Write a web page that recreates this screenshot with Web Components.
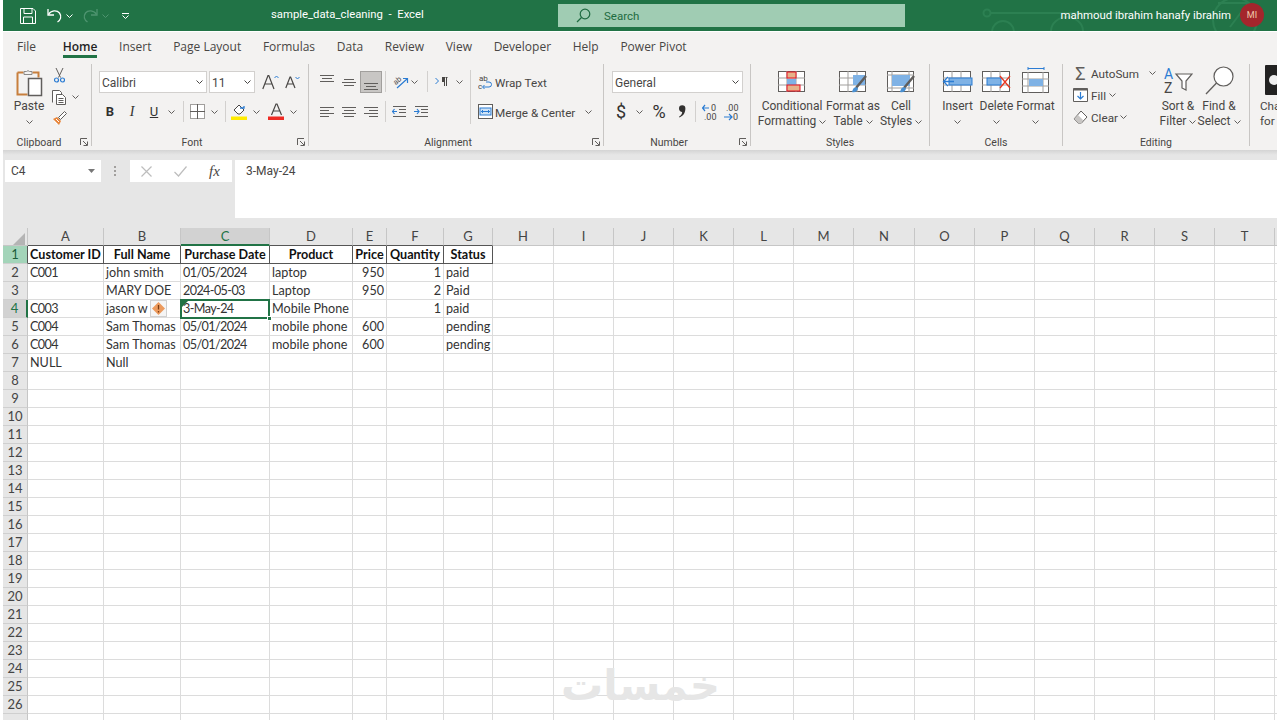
<!DOCTYPE html>
<html lang="en">
<head>
<meta charset="utf-8">
<title>sample_data_cleaning - Excel</title>
<style>
html, body { margin: 0; height: 720px; overflow: hidden; background: #fff; }
body { font-family: Roboto, "Noto Sans", sans-serif; font-size: 12px; color: #444; padding: 0 3px; box-sizing: border-box; }
svg { display: block; }
.row { display: flex; align-items: center; }
.col { display: flex; flex-direction: column; }
.r1 { height: 23px; }
.r2 { height: 23px; margin-top: 7px; }
.vsep { width: 1px; height: 21px; background: #d2d0ce; flex: none; }
.txt { white-space: nowrap; font-size: 11.700px; color: #484644; position: relative; top: 1px; }
.gap { flex: none; }
</style>
</head>
<body>
<x-titlebar title-text="sample_data_cleaning  -  Excel" user="mahmoud ibrahim hanafy ibrahim" initials="MI"></x-titlebar>
<x-tabs active="Home" items="File,Home,Insert,Page Layout,Formulas,Data,Review,View,Developer,Help,Power Pivot"></x-tabs>
<x-ribbon>
  <x-group w="89" label="Clipboard" launcher>
    <div class="row" style="align-items:flex-start;padding-left:4px">
      <x-big w="44" lines="Paste" drop>
        <svg width="28" height="30" viewBox="0 0 28 30"><path d="M2.500 5.500h6M17.500 5.500h6v5M2.500 5.500v22h10" fill="none" stroke="#c87f3d" stroke-width="2"/><path d="M9 4.500h2.500a2 2 0 0 1 3 0H17v3H9z" fill="#f3f2f1" stroke="#8a8886"/><rect x="13.500" y="11.500" width="13" height="17" fill="#fff" stroke="#605e5c" stroke-width="1.500"/></svg>
      </x-big>
      <div class="col" style="margin-top:-6px">
        <x-tool w="16" h="22"><svg width="11" height="15" viewBox="0 0 11 15"><path d="M2 0l4.500 9.500M9 0L4.500 9.500" fill="none" stroke="#605e5c"/><circle cx="2.500" cy="12" r="2" fill="none" stroke="#2b7cd3" stroke-width="1.200"/><circle cx="8.500" cy="12" r="2" fill="none" stroke="#2b7cd3" stroke-width="1.200"/></svg></x-tool>
        <div class="row"><x-tool w="16" h="22"><svg width="15" height="15" viewBox="0 0 15 15"><path d="M.5 12.500V.5h7l2 2v2" fill="#fff" stroke="#605e5c"/><path d="M4.500 4.500h6l3 3v7h-9z" fill="#fff" stroke="#605e5c"/><path d="M6.500 8.500h5M6.500 10.500h5M6.500 12.500h5" stroke="#605e5c" fill="none"/></svg></x-tool><x-tool w="17" h="22"><x-chev></x-chev></x-tool></div>
        <x-tool w="16" h="21"><svg width="15" height="15" viewBox="0 0 15 15"><path d="M1 8l6 6 2-4-4-4z" fill="#e8853a"/><path d="M2 10l3 3M4 8l3 3" stroke="#fff"/><path d="M6.500 6.500l6-6 2 2-6 6z" fill="#fff" stroke="#605e5c"/></svg></x-tool>
      </div>
    </div>
  </x-group>

  <x-group w="217" label="Font" launcher>
    <div class="col" style="padding-left:7px">
      <div class="row r1" style="height:23px">
        <x-combo w="108" text="Calibri"></x-combo><span class="gap" style="width:2px"></span><x-combo w="46" text="11"></x-combo>
        <span class="gap" style="width:6px"></span>
        <x-tool w="18" h="22"><svg width="17" height="16" viewBox="0 0 17 16"><path d="M.8 15L6 1.500h.8L12 15M3 10h7" fill="none" stroke="#484644" stroke-width="1.200"/><path d="M12.500 4l2-2 2 2" fill="none" stroke="#2b7cd3"/></svg></x-tool>
        <span class="gap" style="width:6px"></span>
        <x-tool w="15" h="22"><svg width="15" height="14" viewBox="0 0 15 14"><path d="M.8 13L5 2h.6L10 13M2.500 9h6" fill="none" stroke="#484644" stroke-width="1.200"/><path d="M10.500 2l2 2 2-2" fill="none" stroke="#2b7cd3"/></svg></x-tool>
      </div>
      <div class="row r2">
        <x-tool w="22" h="22"><b style="font:700 13px Roboto;color:#323130">B</b></x-tool>
        <x-tool w="22" h="22"><i style="font:italic 14px 'Liberation Serif';color:#323130">I</i></x-tool>
        <x-tool w="22" h="22"><u style="font:13px Roboto;color:#323130">U</u></x-tool>
        <x-tool w="12" h="22"><x-chev></x-chev></x-tool>
        <span class="gap" style="width:6px"></span><span class="vsep"></span><span class="gap" style="width:2px"></span>
        <x-tool w="22" h="22"><svg width="15" height="15" viewBox="0 0 15 15"><rect x=".5" y=".5" width="14" height="14" fill="#fff" stroke="#a19f9d"/><path d="M7.500 0v15M0 7.500h15" stroke="#605e5c"/></svg></x-tool>
        <x-tool w="12" h="22"><x-chev></x-chev></x-tool>
        <span class="gap" style="width:5px"></span><span class="vsep"></span><span class="gap" style="width:2px"></span>
        <x-tool w="22" h="22"><svg width="17" height="17" viewBox="0 0 17 17"><path d="M3 7l5-5 5 5-4 4H7z" fill="#fff" stroke="#484644"/><path d="M9 5l4 0v-2" fill="none" stroke="#2b7cd3" stroke-width="1.300"/><rect x="0" y="13.500" width="16" height="3.500" fill="#ffeb00"/></svg></x-tool>
        <x-tool w="12" h="22"><x-chev></x-chev></x-tool>
        <span class="gap" style="width:3px"></span>
        <x-tool w="22" h="22"><svg width="17" height="17" viewBox="0 0 17 17"><path d="M3.500 12L8 1h1l4.500 11M5.300 8h6.400" fill="none" stroke="#484644" stroke-width="1.200"/><rect x="0" y="13.500" width="16" height="3.500" fill="#ee2b24"/></svg></x-tool>
        <x-tool w="12" h="22"><x-chev></x-chev></x-tool>
      </div>
    </div>
  </x-group>

  <x-group w="295" label="Alignment" launcher>
    <div class="row" style="align-items:flex-start;padding-left:7px">
      <div class="col">
        <div class="row r1">
          <x-tool w="22" h="22"><x-lines v="0,14 2,10 0,14" top="1"></x-lines></x-tool>
          <x-tool w="22" h="22"><x-lines v="2,10 0,14 2,10" top="5"></x-lines></x-tool>
          <x-tool w="22" h="22" active><x-lines v="0,14 2,10 0,14" top="9"></x-lines></x-tool>
          <span class="gap" style="width:3px"></span><span class="vsep"></span><span class="gap" style="width:6px"></span>
          <x-tool w="16" h="22"><svg width="16" height="16" viewBox="0 0 16 16" style="overflow:visible"><text x="1" y="10" font-size="7.500" font-family="Roboto" fill="#484644" transform="rotate(-40 4 7)">ab</text><path d="M5 14l10-9M11 4.500h4.500V9" fill="none" stroke="#2b7cd3" stroke-width="1.200"/></svg></x-tool>
          <x-tool w="12" h="22"><x-chev></x-chev></x-tool>
          <span class="gap" style="width:7px"></span><span class="vsep"></span><span class="gap" style="width:7px"></span>
          <x-tool w="13" h="22"><svg width="13" height="9" viewBox="0 0 13 9"><path d="M.5 1l3 3-3 3" fill="none" stroke="#2b7cd3"/><path d="M8 0h5M9.500 0v9M11.500 0v9" fill="none" stroke="#484644"/><path d="M7 0h3v5H7z" fill="#484644"/></svg></x-tool>
          <span class="gap" style="width:5px"></span>
          <x-tool w="12" h="22"><x-chev></x-chev></x-tool>
        </div>
        <div class="row r2">
          <x-tool w="22" h="22"><x-lines v="0,14 0,9 0,14 0,9" top="3"></x-lines></x-tool>
          <x-tool w="22" h="22"><x-lines v="0,14 2,10 0,14 2,10" top="3"></x-lines></x-tool>
          <x-tool w="22" h="22"><x-lines v="0,14 5,9 0,14 5,9" top="3"></x-lines></x-tool>
          <span class="gap" style="width:3px"></span><span class="vsep"></span><span class="gap" style="width:6px"></span>
          <x-tool w="14" h="22"><svg width="14" height="11" viewBox="0 0 14 11"><path d="M0 5.500h5M2.500 3L.5 5.500 2.500 8" fill="none" stroke="#2b7cd3" stroke-width="1.200"/><path d="M1 .5h13M7 3.500h7M7 6.500h7M1 10.500h13" stroke="#605e5c"/></svg></x-tool>
          <span class="gap" style="width:8px"></span>
          <x-tool w="14" h="22"><svg width="14" height="11" viewBox="0 0 14 11"><path d="M0 5.500h5M3 3l2 2.500L3 8" fill="none" stroke="#2b7cd3" stroke-width="1.200"/><path d="M1 .5h13M7 3.500h7M7 6.500h7M1 10.500h13" stroke="#605e5c"/></svg></x-tool>
        </div>
      </div>
      <span class="gap" style="width:5px"></span>
      <span class="vsep" style="height:54px"></span>
      <span class="gap" style="width:7px"></span>
      <div class="col">
        <div class="row r1"><x-tool w="15" h="22"><svg width="15" height="16" viewBox="0 0 15 16"><text x="1" y="7" font-size="8" font-family="Roboto" fill="#484644">ab</text><text x="0" y="15" font-size="8" font-family="Roboto" fill="#484644">c</text><path d="M5 13h6a2.500 2.500 0 0 0 0-5H8M6.500 11l-2 2 2 2" fill="none" stroke="#2b7cd3"/></svg></x-tool><span class="gap" style="width:2px"></span><span class="txt">Wrap Text</span></div>
        <div class="row r2"><x-tool w="15" h="22"><svg width="15" height="15" viewBox="0 0 15 15"><rect x=".5" y=".5" width="14" height="14" fill="#fff" stroke="#605e5c"/><rect x="2" y="4" width="11" height="7" fill="#cfe3f6" stroke="#2b7cd3"/><path d="M3 7.500h9M5 6L3.500 7.500 5 9M10 6l1.500 1.500L10 9" fill="none" stroke="#2b7cd3"/></svg></x-tool><span class="gap" style="width:2px"></span><span class="txt">Merge &amp; Center</span><span class="gap" style="width:7px"></span><x-tool w="12" h="22"><x-chev></x-chev></x-tool></div>
      </div>
    </div>
  </x-group>

  <x-group w="147" label="Number" launcher>
    <div class="col" style="padding-left:8px">
      <div class="row r1"><x-combo w="131" text="General"></x-combo></div>
      <div class="row r2">
        <x-tool w="18" h="22"><span style="font:18px Roboto;color:#323130">$</span></x-tool>
        <x-tool w="18" h="22"><x-chev></x-chev></x-tool>
        <span class="gap" style="width:1px"></span>
        <x-tool w="20" h="22"><span style="font:18px Roboto;color:#323130">%</span></x-tool>
        <span class="gap" style="width:3px"></span>
        <x-tool w="20" h="22"><svg width="8" height="13" viewBox="0 0 8 13"><path d="M1 3.500a3.200 3.200 0 1 1 6.400 0C7.400 8 5 11 1.500 12.500L1 11.800C3 10.500 4 9 4.200 7 2.500 7 1 5.500 1 3.500z" fill="#323130"/></svg></x-tool>
        <span class="gap" style="width:3px"></span><span class="vsep"></span><span class="gap" style="width:4px"></span>
        <x-tool w="20" h="22"><svg width="16" height="18" viewBox="0 0 16 18"><text x="9" y="8" font-size="9" font-family="Roboto" fill="#484644">0</text><text x="2" y="17" font-size="9" font-family="Roboto" fill="#484644">.00</text><path d="M0 5h7M3 2L.5 5 3 8" fill="none" stroke="#2b7cd3" stroke-width="1.200"/></svg></x-tool>
        <span class="gap" style="width:2px"></span>
        <x-tool w="20" h="22"><svg width="16" height="18" viewBox="0 0 16 18"><text x="2" y="8" font-size="9" font-family="Roboto" fill="#484644">.00</text><text x="9" y="17" font-size="9" font-family="Roboto" fill="#484644">0</text><path d="M0 14h8M5 11l3 3-3 3" fill="none" stroke="#2b7cd3" stroke-width="1.200"/></svg></x-tool>
      </div>
    </div>
  </x-group>

  <x-group w="179" label="Styles">
    <div class="row" style="align-items:flex-start;padding-left:10px">
      <x-big w="62" lines="Conditional|Formatting" chev>
        <svg width="28" height="22" viewBox="0 0 28 22"><rect x=".5" y=".5" width="26" height="20" fill="#fff" stroke="#605e5c"/><path d="M9 0v21M18 0v21M0 7h27M0 14h27" stroke="#a19f9d"/><rect x="9" y="1" width="9" height="6" fill="#e6b289" stroke="#e81123"/><rect x="9" y="8" width="9" height="6" fill="#7fb2e5"/><rect x="9" y="14" width="13" height="6" fill="#e6b289" stroke="#e81123"/></svg>
      </x-big>
      <x-big w="60" lines="Format as|Table" chev>
        <svg width="28" height="22" viewBox="0 0 28 22"><rect x=".5" y=".5" width="26" height="20" fill="#fff" stroke="#605e5c"/><path d="M9 0v21M18 0v21M0 7h27M0 14h27" stroke="#a19f9d"/><rect x="14" y="4" width="12" height="10" fill="#7fb2e5"/><path d="M27 5L17 17" stroke="#605e5c" stroke-width="2.500"/><path d="M13 21c1-4 3-6 6-4 0 3-3 5-6 4z" fill="#4a90d2"/></svg>
      </x-big>
      <x-big w="36" lines="Cell|Styles" chev>
        <svg width="28" height="22" viewBox="0 0 28 22"><rect x=".5" y=".5" width="26" height="20" fill="#fff" stroke="#605e5c"/><path d="M5 0v21M22 0v21M0 4h27M0 17h27" stroke="#a19f9d"/><rect x="5" y="4" width="18" height="11" fill="#7fb2e5"/><path d="M27 5L17 17" stroke="#605e5c" stroke-width="2.500"/><path d="M13 21c1-4 3-6 6-4 0 3-3 5-6 4z" fill="#4a90d2"/></svg>
      </x-big>
    </div>
  </x-group>

  <x-group w="133" label="Cells">
    <div class="row" style="align-items:flex-start;padding-left:8px">
      <x-big w="39" lines="Insert" drop>
        <svg width="31" height="22" viewBox="0 0 31 22"><rect x="1.500" y=".5" width="27" height="20" fill="#fff" stroke="#605e5c"/><path d="M10 0v21M19 0v21M1 7h28M1 14h28" stroke="#a19f9d"/><rect x="7" y="7" width="23" height="7" fill="#7fb2e5" stroke="#2b7cd3"/><path d="M12 10.500H2M6 6l-4.500 4.500L6 15" fill="#fff" stroke="#2b7cd3" stroke-width="1.300"/></svg>
      </x-big>
      <x-big w="39" lines="Delete" drop>
        <svg width="29" height="22" viewBox="0 0 29 22"><rect x=".5" y=".5" width="27" height="20" fill="#fff" stroke="#605e5c"/><path d="M9 0v21M18 0v21M0 7h28M0 14h28" stroke="#a19f9d"/><rect x="5" y="7" width="14" height="7" fill="#7fb2e5" stroke="#2b7cd3"/><path d="M18 5l10 12M28 5L18 17" stroke="#e8361f" stroke-width="1.300" fill="none"/></svg>
      </x-big>
      <x-big w="39" lines="Format" drop>
        <svg width="28" height="26" viewBox="0 0 28 26" style="margin-top:-4px"><path d="M6 1.500h16M6 0v3M22 0v3" stroke="#2b7cd3"/><rect x=".5" y="5.500" width="26" height="20" fill="#fff" stroke="#605e5c"/><path d="M6 5v21M21 5v21M0 12h27M0 19h27" stroke="#a19f9d"/><rect x="7" y="12" width="14" height="7" fill="#7fb2e5"/></svg>
      </x-big>
    </div>
  </x-group>

  <x-group w="187" label="Editing">
    <div class="row" style="align-items:flex-start;padding-left:10px">
      <div class="col" style="margin-top:-8px;width:84px">
        <div class="row" style="height:22px"><x-tool w="15" h="22"><span style="font:18px Roboto;color:#605e5c">Σ</span></x-tool><span class="gap" style="width:3px"></span><span class="txt">AutoSum</span><span class="gap" style="width:9px"></span><x-tool w="8" h="22"><x-chev></x-chev></x-tool></div>
        <div class="row" style="height:22px"><x-tool w="15" h="22"><svg width="15" height="14" viewBox="0 0 15 14"><path d="M.5.500h14v13H.5z" fill="#fff" stroke="#605e5c"/><path d="M.5 1.500h14" stroke="#605e5c" stroke-width="2"/><path d="M7.500 4v7M4.500 8l3 3 3-3" fill="none" stroke="#2b7cd3" stroke-width="1.200"/></svg></x-tool><span class="gap" style="width:3px"></span><span class="txt">Fill</span><x-tool w="12" h="22"><x-chev></x-chev></x-tool></div>
        <div class="row" style="height:22px"><x-tool w="15" h="22"><svg width="15" height="14" viewBox="0 0 15 14"><path d="M8 1l6 6-5.500 6H5L1 9z" fill="#fff" stroke="#605e5c"/><path d="M5 5l5 5-1.500 3H5L1 9z" fill="#c8c6c4"/></svg></x-tool><span class="gap" style="width:3px"></span><span class="txt">Clear</span><x-tool w="12" h="22"><x-chev></x-chev></x-tool></div>
      </div>
      <x-big w="42" lines="Sort &amp;|Filter" chev>
        <svg width="30" height="28" viewBox="0 0 30 28" style="margin-top:-3px"><text x="1" y="12" font-size="14" font-family="Roboto" fill="#2b7cd3">A</text><text x="1" y="26" font-size="14" font-family="Roboto" fill="#484644">Z</text><path d="M13 7h16l-6 7v9l-4-2v-7z" fill="#fff" stroke="#605e5c" stroke-width="1.200"/></svg>
      </x-big>
      <x-big w="40" lines="Find &amp;|Select" chev>
        <svg width="29" height="29" viewBox="0 0 29 29" style="margin-top:-4px"><circle cx="18.500" cy="10.500" r="9.500" fill="#fff" stroke="#605e5c" stroke-width="1.200"/><path d="M11.500 17L1 28" stroke="#605e5c" stroke-width="1.300"/></svg>
      </x-big>
    </div>
  </x-group>

  <x-group w="27" label="" last>
    <div class="col" style="padding-left:10px;width:70px;margin-top:-5px">
      <div style="width:27px;height:30px;margin-left:5px;background:#222;border-radius:1px;display:flex;align-items:center;padding-left:4px;box-sizing:border-box"><span style="width:10px;height:10px;border-radius:50%;background:#eee"></span></div>
      <span class="txt" style="line-height:15px;margin-top:3px">Cha</span>
      <span class="txt" style="line-height:15px">for</span>
    </div>
  </x-group>
</x-ribbon>
<x-formula-bar name="C4" value="3-May-24"></x-formula-bar>
<x-sheet></x-sheet>

<script>
class XTitlebar extends HTMLElement {
  connectedCallback() {
    this.attachShadow({ mode: "open" });
    this.shadowRoot.innerHTML = `
    <style>
    :host { display: flex; align-items: center; height: 31px; background: #217346; position: relative; overflow: hidden; color: #fff; }
    .qat { width: 268px; flex: none; display: flex; align-items: center; padding-left: 17px; box-sizing: border-box; }
    .title { width: 287px; flex: none; font-size: 11.300px; white-space: pre; position: relative; top: -1px; }
    .search { width: 347px; height: 23px; flex: none; background: #a0ccb3; display: flex; align-items: center; color: #1e6b41; font-size: 11.500px; box-sizing: border-box; padding-left: 18px; }
    .search svg { margin-right: 13px; }
    .user { margin-left: auto; display: flex; align-items: center; font-size: 11.400px; padding-right: 13px; gap: 9px; position: relative; top: -1px; }
    .avatar { width: 24px; height: 24px; border-radius: 50%; background: #a4262c; color: #f0c8a8; font-size: 9px; display: flex; align-items: center; justify-content: center; }
    .pattern { position: absolute; left: 970px; top: 0; }
    svg { display: block; flex: none; }
    </style>
    <svg class="pattern" width="304" height="31" viewBox="0 0 304 31" fill="none" stroke="#2c8052" stroke-width="2"><circle cx="14" cy="13" r="3.500"/><path d="M18 13h135"/><circle cx="30" cy="32" r="11"/><path d="M78 31c0-8 8-14 16-14s16 6 16 14"/><circle cx="262" cy="20" r="22"/><path d="M245 3h30l-18 24"/></svg>
    <div class="qat">
      <svg width="16" height="16" viewBox="0 0 16 16" fill="none" stroke="#fff"><path d="M.5.500h12.500l2.500 2.500v12.500H.5z"/><path d="M4 .5v5h8v-5M3.500 15.500v-6.500h9v6.500"/></svg>
      <span style="width:11px"></span>
      <svg width="15" height="15" viewBox="0 0 15 15" fill="none" stroke="#fff" stroke-width="1.300"><path d="M1 1v6h6"/><path d="M1.500 6.500C4 2 10 2 12.500 5c2.500 3.500 1 7-2 9"/></svg>
      <span style="width:4px"></span>
      <svg width="7" height="4" viewBox="0 0 7 4" fill="none" stroke="#fff"><path d="M.5.500l3 3 3-3"/></svg>
      <span style="width:10px"></span>
      <svg width="15" height="15" viewBox="0 0 15 15" fill="none" stroke="#4f9470" stroke-width="1.300"><path d="M14 1v6H8"/><path d="M13.500 6.500C11 2 5 2 2.500 5c-2.500 3.500-1 7 2 9"/></svg>
      <span style="width:4px"></span>
      <svg width="7" height="4" viewBox="0 0 7 4" fill="none" stroke="#4f9470"><path d="M.5.500l3 3 3-3"/></svg>
      <span style="width:13px"></span>
      <svg width="7" height="6" viewBox="0 0 7 6" fill="none" stroke="#fff"><path d="M0 .5h7M.5 2.500l3 3 3-3"/></svg>
    </div>
    <div class="title">${this.getAttribute("title-text")}</div>
    <div class="search">
      <svg width="15" height="15" viewBox="0 0 15 15" fill="none" stroke="#1e6b41" stroke-width="1.200"><circle cx="9" cy="6" r="4.800"/><path d="M5.500 9.500L1 14"/></svg>
      Search
    </div>
    <div class="user"><span>${this.getAttribute("user")}</span><span class="avatar">${this.getAttribute("initials")}</span></div>
    `;
  }
}
customElements.define("x-titlebar", XTitlebar);

class XTabs extends HTMLElement {
  connectedCallback() {
    this.attachShadow({ mode: "open" });
    const active = this.getAttribute("active");
    const items = this.getAttribute("items").split(",");
    this.shadowRoot.innerHTML = `
    <style>
    :host { display: flex; height: 31px; background: #f3f2f1; padding: 5px 0 0 14px; gap: 21.700px; font: 12px "Open Sans", sans-serif; color: #484644; border-top: 1px solid #fff; box-sizing: border-box; }
    span { display: flex; align-items: center; height: 18px; white-space: nowrap; }
    span:first-of-type { margin-right: 5px; }
    .on { font-weight: 600; color: #1f1f1f; box-shadow: 0 3px 0 0 #217346; }
    </style>
    ${items.map((t) => `<span class="${t === active ? "on" : ""}">${t}</span>`).join("")}
    `;
  }
}
customElements.define("x-tabs", XTabs);

class XRibbon extends HTMLElement {
  constructor() {
    super();
    this.attachShadow({ mode: "open" });
    this.shadowRoot.innerHTML = `
    <style>
    :host { display: flex; height: 88px; background: #f3f2f1; overflow: hidden; }
    </style>
    <slot></slot>
    `;
  }
}
customElements.define("x-ribbon", XRibbon);

class XGroup extends HTMLElement {
  connectedCallback() {
    this.attachShadow({ mode: "open" });
    const launcher = this.hasAttribute("launcher");
    const last = this.hasAttribute("last");
    this.shadowRoot.innerHTML = `
    <style>
    :host { display: grid; grid-template-rows: 1fr 10px; flex: none; box-sizing: border-box; width: ${this.getAttribute("w")}px;
      height: 82px; margin-top: 2px; padding-top: 6px; position: relative; border-right: ${last ? "0" : "1px solid #c8c6c4"}; }
    .content { min-height: 0; }
    .label { font-size: 10.500px; line-height: 10px; color: #484644; text-align: center; padding-right: ${launcher ? 16 : 0}px; position: relative; top: 2px; }
    .launcher { position: absolute; right: 3px; bottom: 0; width: 8px; height: 8px; }
    </style>
    <div class="content"><slot></slot></div>
    <div class="label">${this.getAttribute("label")}</div>
    ${launcher ? `<svg class="launcher" viewBox="0 0 8 8" fill="none" stroke="#605e5c"><path d="M.5 7V.5H7M3 3l4 4M7.500 3.500v4h-4"/></svg>` : ""}
    `;
  }
}
customElements.define("x-group", XGroup);

class XChev extends HTMLElement {
  connectedCallback() {
    this.attachShadow({ mode: "open" });
    this.shadowRoot.innerHTML = `
    <style>:host { display: inline-block; width: 7px; height: 4px; } svg { display: block; }</style>
    <svg width="7" height="4" viewBox="0 0 7 4" fill="none" stroke="#605e5c"><path d="M.5.500l3 3 3-3"/></svg>
    `;
  }
}
customElements.define("x-chev", XChev);

class XTool extends HTMLElement {
  connectedCallback() {
    this.attachShadow({ mode: "open" });
    const active = this.hasAttribute("active");
    this.shadowRoot.innerHTML = `
    <style>
    :host { display: flex; align-items: center; justify-content: center; flex: none; box-sizing: border-box;
      width: ${this.getAttribute("w")}px; height: ${this.getAttribute("h")}px;
      ${active ? "background: #c8c6c4; border: 1px solid #a19f9d;" : ""} }
    </style>
    <slot></slot>
    `;
  }
}
customElements.define("x-tool", XTool);

class XLines extends HTMLElement {
  connectedCallback() {
    this.attachShadow({ mode: "open" });
    const rows = this.getAttribute("v").trim().split(" ").map((p) => p.split(",").map(Number));
    const top = Number(this.getAttribute("top"));
    const paths = rows.map((r, i) => `M${r[0]} ${top + i * 3 + .5}h${r[1]}`).join("");
    this.shadowRoot.innerHTML = `
    <style>:host { display: block; width: 14px; height: 16px; } svg { display: block; }</style>
    <svg width="14" height="16" viewBox="0 0 14 16"><path d="${paths}" stroke="#605e5c" fill="none"/></svg>
    `;
  }
}
customElements.define("x-lines", XLines);

class XCombo extends HTMLElement {
  connectedCallback() {
    this.attachShadow({ mode: "open" });
    this.shadowRoot.innerHTML = `
    <style>
    :host { display: flex; align-items: center; justify-content: space-between; flex: none; box-sizing: border-box; height: 22px;
      width: ${this.getAttribute("w")}px; background: #fff; border: 1px solid #d2d0ce; padding: 0 3px 0 2px; font-size: 12px; color: #484644; }
    span { position: relative; top: 1px; }
    svg { display: block; }
    </style>
    <span>${this.getAttribute("text")}</span>
    <svg width="7" height="4" viewBox="0 0 7 4" fill="none" stroke="#484644"><path d="M.5.500l3 3 3-3"/></svg>
    `;
  }
}
customElements.define("x-combo", XCombo);

class XBig extends HTMLElement {
  connectedCallback() {
    this.attachShadow({ mode: "open" });
    const lines = this.getAttribute("lines").split("|");
    const chev = `<svg class="c" width="7" height="4" viewBox="0 0 7 4" fill="none" stroke="#605e5c"><path d="M.5.500l3 3 3-3"/></svg>`;
    this.shadowRoot.innerHTML = `
    <style>
    :host { display: flex; flex-direction: column; align-items: center; flex: none; width: ${this.getAttribute("w")}px; margin-top: -4px; }
    .icon { height: 32px; margin-bottom: 1px; display: flex; align-items: center; justify-content: center; }
    .l { font-size: 12px; line-height: 15px; color: #484644; white-space: nowrap; display: flex; align-items: center; gap: 3px; }
    .c { display: block; }
    .drop { height: 15px; display: flex; align-items: center; }
    </style>
    <div class="icon"><slot></slot></div>
    ${lines.map((t, i) => `<div class="l">${t}${this.hasAttribute("chev") && i === lines.length - 1 ? chev : ""}</div>`).join("")}
    ${this.hasAttribute("drop") ? `<div class="drop">${chev}</div>` : ""}
    `;
  }
}
customElements.define("x-big", XBig);

class XFormulaBar extends HTMLElement {
  connectedCallback() {
    this.attachShadow({ mode: "open" });
    this.shadowRoot.innerHTML = `
    <style>
    :host { display: flex; align-items: flex-start; height: 78px; padding: 10px 0 0 2px; box-sizing: border-box; background: linear-gradient(#d4d4d4, #e6e6e6 5px); font-size: 12px; color: #484644; }
    .box { background: #fff; height: 22px; display: flex; align-items: center; box-sizing: border-box; flex: none; }
    .name { width: 96px; padding: 0 6px; justify-content: space-between; }
    .dots { width: 28px; display: flex; justify-content: center; height: 22px; align-items: center; flex: none; margin-right: 1px; }
    .fx { width: 102px; padding-left: 11px; gap: 22px; }
    .value { margin-left: 3px; flex: 1; height: 58px; align-items: flex-start; padding: 4px 11px; }
    i { font: italic 15px "Liberation Serif", serif; color: #484644; }
    svg { display: block; }
    </style>
    <div class="box name"><span>${this.getAttribute("name")}</span><svg width="7" height="4" viewBox="0 0 7 4" fill="#777"><path d="M0 0h7L3.500 4z"/></svg></div>
    <div class="dots"><svg width="2" height="11" viewBox="0 0 2 11" fill="#a19f9d"><path d="M0 0h2v2H0zM0 4h2v2H0zM0 8h2v2H0z"/></svg></div>
    <div class="box fx">
      <svg width="11" height="11" viewBox="0 0 11 11" fill="none" stroke="#bdbdbd" stroke-width="1.200"><path d="M.5.500l10 10M10.500.500l-10 10"/></svg>
      <svg width="13" height="11" viewBox="0 0 13 11" fill="none" stroke="#bdbdbd" stroke-width="1.200"><path d="M.5 6l4 4 8-9.500"/></svg>
      <i>fx</i>
    </div>
    <div class="box value">${this.getAttribute("value")}</div>
    `;
  }
}
customElements.define("x-formula-bar", XFormulaBar);

class XSheet extends HTMLElement {
  connectedCallback() {
    this.attachShadow({ mode: "open" });
    const widths = [76, 77, 89, 83, 34, 57, 49, 61, 60, 60, 60, 60, 60, 61, 60, 60, 60, 60, 60, 60, 60];
    const letters = "ABCDEFGHIJKLMNOPQRST".split("").concat("");
    const data = [
      ["Customer ID", "Full Name", "Purchase Date", "Product", "Price", "Quantity", "Status"],
      ["C001", "john smith", "01/05/2024", "laptop", "950", "1", "paid"],
      ["", "MARY DOE", "2024-05-03", "Laptop", "950", "2", "Paid"],
      ["C003", "jason w", "3-May-24", "Mobile Phone", "", "1", "paid"],
      ["C004", "Sam Thomas", "05/01/2024", "mobile phone", "600", "", "pending"],
      ["C004", "Sam Thomas", "05/01/2024", "mobile phone", "600", "", "pending"],
      ["NULL", "Null"],
    ];
    let html = `<div class="ch corner"><svg width="12" height="12" viewBox="0 0 12 12"><path d="M12 0v12H0z" fill="#b4b4b4"/></svg></div>`;
    letters.forEach((l, c) => {
      html += `<div class="ch${c === 2 ? " sel" : ""}${c < 7 ? " top" : ""}">${l}</div>`;
    });
    for (let r = 0; r < 27; r++) {
      html += `<div class="rh${r === 0 ? " r-one" : ""}${r === 3 ? " r-cur" : ""}">${r < 26 ? r + 1 : ""}</div>`;
      for (let c = 0; c < letters.length; c++) {
        const v = (data[r] && data[r][c]) || "";
        const num = v !== "" && r > 0 && (c === 4 || c === 5);
        const tight = r > 0 && (/^\d.*[-/]/.test(v) || /^C0/.test(v));
        html += `<div class="cell${r === 0 && c < 7 ? " hd" : ""}${num ? " num" : ""}${tight ? " tight" : ""}">${v}</div>`;
      }
    }
    this.shadowRoot.innerHTML = `
    <style>
    :host { display: block; position: relative; height: 492px; overflow: hidden; font: 12.600px/17px Lato, "Liberation Sans", sans-serif; color: #333; background: #fff; }
    .grid { display: grid; grid-template-columns: 25px ${widths.map((w) => w + "px").join(" ")}; grid-auto-rows: 18px; }
    .ch, .rh { background: #e6e6e6; display: flex; align-items: center; justify-content: center; box-sizing: border-box; color: #444; font-size: 13px; }
    .ch { border-right: 1px solid #c6c6c6; border-bottom: 1px solid #c6c6c6; }
    .ch.top { border-bottom-color: #555; }
    .corner { align-items: flex-end; justify-content: flex-end; padding: 0 2px 0 0; }
    .ch.sel { background: #d2d2d2; color: #217346; border-bottom: 2px solid #217346; }
    .rh { border-right: 1px solid #c6c6c6; border-bottom: 1px solid #cfcfcf; }
    .r-one { background: #a3d4b9; color: #1d5c39; border-right-color: #555; }
    .r-cur { background: #d2d2d2; color: #217346; border-right: 2px solid #217346; }
    .cell { border-right: 1px solid #dcdcdc; border-bottom: 1px solid #dcdcdc; box-sizing: border-box; padding: 0 2px; white-space: nowrap; overflow: hidden; }
    .num { text-align: right; }
    .tight { letter-spacing: -.6px; }
    .hd { font-weight: 700; text-align: center; border-color: #555; padding: 0 1px; color: #111; }
    .cursor { position: absolute; left: 177px; top: 71px; width: 90px; height: 20px; box-sizing: border-box; border: 2px solid #217346; }
    .cursor::before { content: ""; position: absolute; left: 0; top: 0; border: 3px solid; border-color: #217346 transparent transparent #217346; }
    .cursor::after { content: ""; position: absolute; right: -4px; bottom: -4px; width: 5px; height: 5px; background: #217346; border: 1px solid #fff; box-sizing: border-box; }
    .warn { position: absolute; left: 147px; top: 72px; width: 17px; height: 17px; box-sizing: border-box; background: #f5f5f5; border: 1px solid #d0d0d0; display: flex; align-items: center; justify-content: center; }
    .mark { position: absolute; left: 558px; top: 433px; font: 700 42px/50px "DejaVu Sans", sans-serif; color: #e6e6e6; pointer-events: none; }
    svg { display: block; }
    </style>
    <div class="grid">${html}</div>
    <div class="cursor"></div>
    <div class="warn"><svg width="13" height="13" viewBox="0 0 13 13"><path d="M6.500 0L13 6.500 6.500 13 0 6.500z" fill="#ec9a5d"/><path d="M6.500 3v4.500M6.500 9v1.500" stroke="#7a3b10" stroke-width="1.300"/></svg></div>
    <div class="mark" dir="rtl" lang="ar">خمسات</div>
    `;
  }
}
customElements.define("x-sheet", XSheet);
</script>
</body>
</html>
